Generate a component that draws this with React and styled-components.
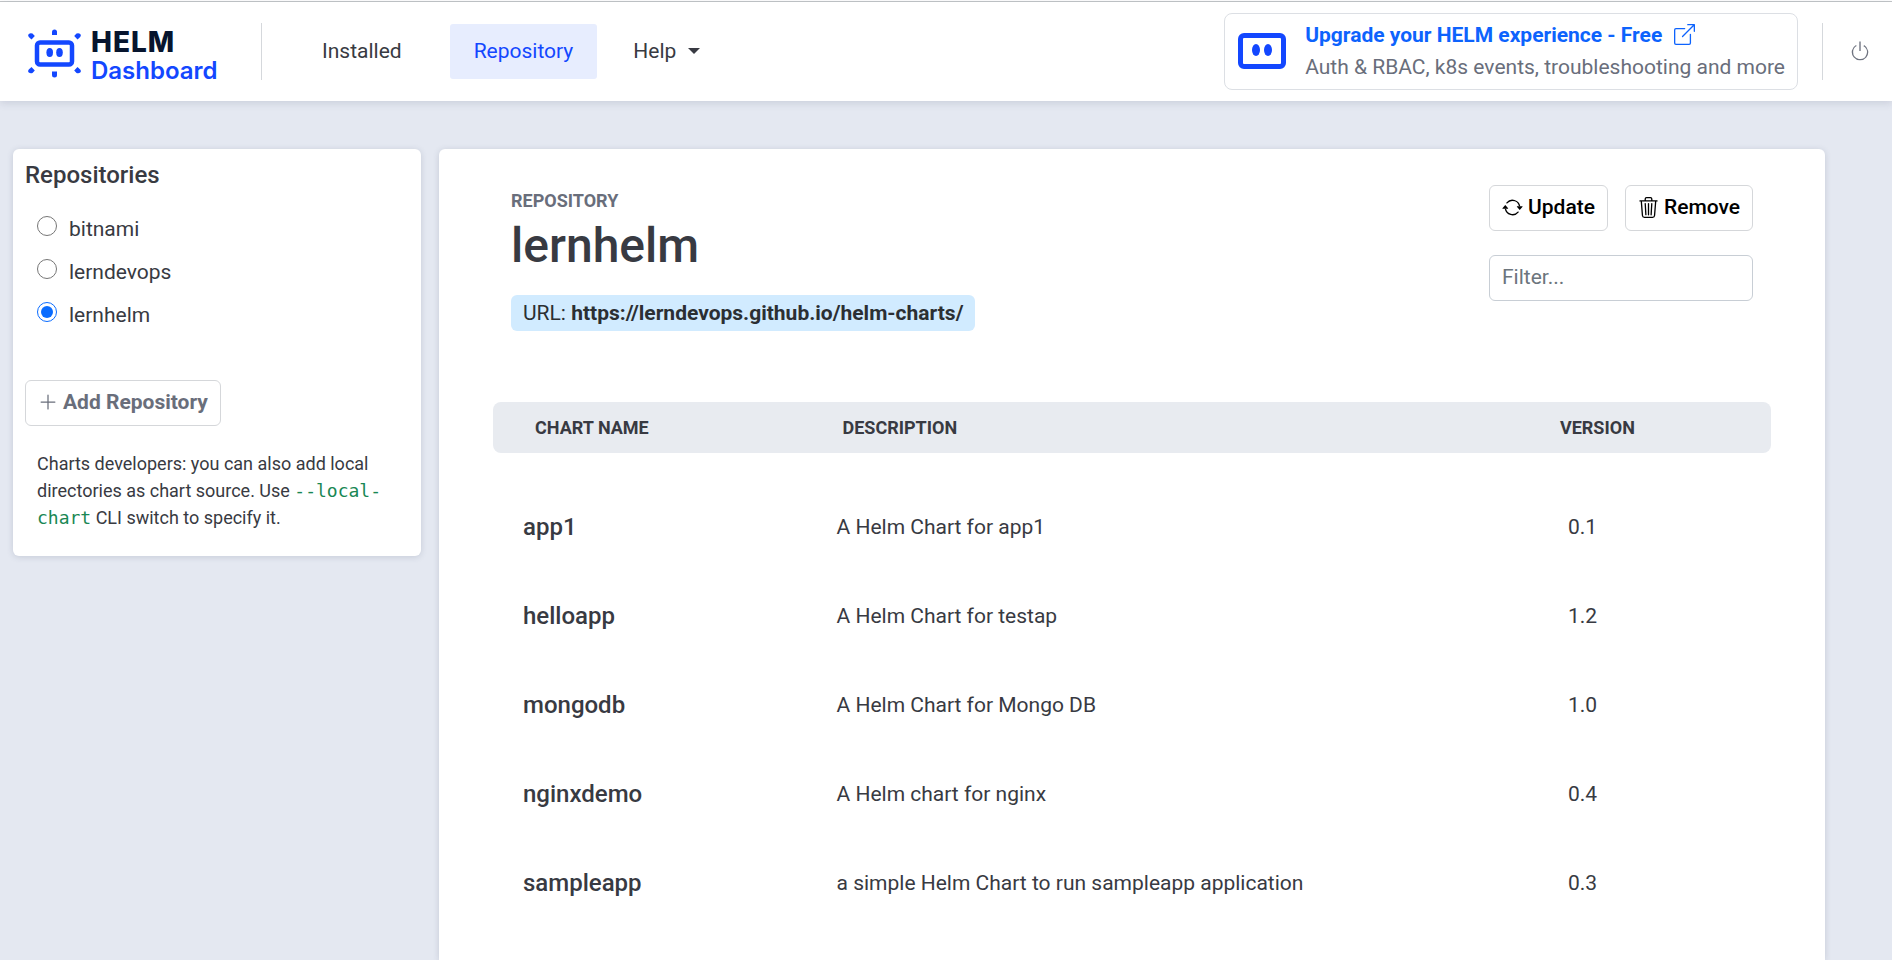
import React, { useState } from "react";
import styled, { createGlobalStyle, css } from "styled-components";
import {
  BsArrowRepeat,
  BsBoxArrowUpRight,
  BsPlusLg,
  BsPower,
  BsTrash3,
} from "react-icons/bs";

const GlobalStyle = createGlobalStyle`
  *, *::before, *::after { box-sizing: border-box; }
  body {
    margin: 0;
    background: #e4e8f1;
    color: #383a42;
    font-family: Roboto, "Liberation Sans", sans-serif;
    font-size: 21px;
    line-height: 32px;
  }
  button, input { font: inherit; }
`;

const Page = styled.div`
  display: flex;
  flex-direction: column;
  min-height: 100vh;
`;

const TopEdge = styled.div`
  height: 2px;
  background: #fff;
  border-bottom: 1px solid #c3c6c8;
`;

const Header = styled.header`
  display: flex;
  align-items: center;
  min-height: 99px;
  padding: 0 21px 0 28px;
  background: #fff;
  box-shadow: 0 2px 8px rgba(60, 70, 100, 0.16);
`;

const Brand = styled.a`
  display: flex;
  align-items: center;
  gap: 10px;
  height: 57px;
  padding: 4px 44px 0 0;
  border-right: 1px solid #d5d8dc;
  text-decoration: none;
`;

const BrandText = styled.span`
  display: flex;
  flex-direction: column;
  width: 126px;
  padding-top: 4px;
`;

const BrandName = styled.span`
  color: #07152e;
  font: 800 28px/30px Inter, sans-serif;
  letter-spacing: 1px;
`;

const BrandProduct = styled.span`
  color: #1347ff;
  font: 600 24px/28px Inter, sans-serif;
`;

const Nav = styled.nav`
  display: flex;
  align-items: center;
  gap: 24px;
  padding-left: 36px;
`;

const NavLink = styled.a`
  padding: 11px 24px 12px;
  border-radius: 3px;
  color: #383a42;
  text-decoration: none;
  ${(p) =>
    p.$active &&
    css`
      background: #e7edfe;
      color: #1347ff;
    `}
`;

const NavMenu = styled.button`
  display: flex;
  align-items: center;
  gap: 12px;
  padding: 0 12px 2px;
  border: 0;
  background: none;
  color: #383a42;
`;

const HeaderEnd = styled.div`
  display: flex;
  align-items: center;
  gap: 24px;
  margin-left: auto;
`;

const Promo = styled.a`
  display: flex;
  align-items: center;
  gap: 19px;
  min-height: 77px;
  padding: 0 12px 2px 13px;
  border: 1px solid #dcdfe4;
  border-radius: 8px;
  color: #696e7b;
  text-decoration: none;
`;

const PromoTitle = styled.span`
  display: flex;
  align-items: center;
  gap: 12px;
  color: #0d63fd;
  font-weight: 700;
`;

const PowerArea = styled.div`
  display: flex;
  align-items: center;
  height: 57px;
  padding: 0 0 2px 26px;
  border-left: 1px solid #d5d8dc;
`;

const PowerButton = styled.button`
  display: flex;
  padding: 0;
  border: 0;
  background: none;
  color: #6f7480;
`;

const Layout = styled.div`
  display: flex;
  align-items: flex-start;
  flex: 1;
  gap: 18px;
  padding: 48px 67px 0 13px;
`;

const Card = styled.section`
  background: #fff;
  border-radius: 6px;
  box-shadow: 0 1px 6px rgba(60, 70, 100, 0.18);
`;

const Sidebar = styled(Card).attrs({ as: "aside" })`
  flex: 0 0 408px;
  padding: 11px 12px 25px;
`;

const SidebarTitle = styled.h2`
  margin: 0 0 17px;
  font-size: 24px;
  line-height: 30px;
  font-weight: 500;
`;

const RepoList = styled.div`
  display: flex;
  flex-direction: column;
  padding-left: 12px;
`;

const RepoOption = styled.label`
  display: flex;
  align-items: center;
  gap: 12px;
  height: 43px;
`;

const Radio = styled.input`
  width: 20px;
  height: 20px;
  margin: 0 0 5px;
  accent-color: #0a6cff;
`;

const Button = styled.button`
  display: inline-flex;
  align-items: center;
  gap: 5px;
  height: 46px;
  padding: 0 12px 2px;
  border: 1px solid #d5d7da;
  border-radius: 6px;
  background: #fff;
  color: ${(p) => (p.$muted ? "#696e7b" : "#000")};
  font-weight: ${(p) => (p.$muted ? 700 : 500)};
`;

const AddRow = styled.div`
  display: flex;
  margin-top: 44px;
`;

const Hint = styled.p`
  margin: 24px 12px 0;
  font-size: 18px;
  line-height: 27px;
`;

const Code = styled.code`
  color: #198754;
  font-family: "DejaVu Sans Mono", monospace;
  font-size: 18px;
`;

const Main = styled(Card).attrs({ as: "main" })`
  flex: 1;
  align-self: stretch;
  min-width: 0;
  padding: 36px 54px 0;
  border-radius: 6px 6px 0 0;
`;

const Top = styled.div`
  display: flex;
  justify-content: space-between;
  padding: 0 18px;
`;

const Heading = styled.div`
  display: flex;
  flex-direction: column;
  align-items: flex-start;
`;

const Eyebrow = styled.span`
  margin-top: 4px;
  color: #696e7b;
  font-size: 18px;
  line-height: 24px;
  font-weight: 700;
`;

const RepoName = styled.h1`
  margin: 0 0 16px;
  font-size: 48px;
  line-height: 66px;
  font-weight: 500;
`;

const UrlBadge = styled.div`
  padding: 2px 12px;
  border-radius: 6px;
  background: #d1ebff;
  color: #2b2f33;
`;

const Tools = styled.div`
  display: flex;
  flex-direction: column;
  gap: 24px;
`;

const Actions = styled.div`
  display: flex;
  gap: 17px;
`;

const Filter = styled.input`
  width: 0;
  min-width: 100%;
  height: 46px;
  padding: 0 12px 2px;
  border: 1px solid #c8ced5;
  border-radius: 6px;
  background: #fff;
  color: inherit;
  &::placeholder {
    color: #6c757d;
    opacity: 1;
  }
`;

const ChartTable = styled.table`
  width: 100%;
  margin-top: 71px;
  border-collapse: separate;
  border-spacing: 0;
  table-layout: fixed;
  text-align: left;
`;

const Column = styled.col`
  width: ${(p) => p.$width};
`;

const HeadCell = styled.th`
  height: 51px;
  padding: 0 0 0 ${(p) => p.$inset};
  background: #e8ebf0;
  font-size: 18px;
  line-height: 24px;
  font-weight: 700;
  &:first-child { border-radius: 8px 0 0 8px; }
  &:last-child { border-radius: 0 8px 8px 0; }
`;

const Row = styled.tr`
  height: 89px;
`;

const Body = styled.tbody`
  &::before {
    content: "";
    display: table-row;
    height: 29px;
  }
`;

const Cell = styled.td`
  padding: 0 0 0 ${(p) => p.$inset};
`;

const NameCell = styled(Cell)`
  font-size: 24px;
  font-weight: 500;
`;

const HelmMark = () => (
  <svg width="53" height="49" viewBox="0 0 53 49" fill="none" aria-hidden="true">
    <rect x="9" y="13.5" width="35" height="22" rx="3" stroke="#1347ff" strokeWidth="4.5" />
    <ellipse cx="21.7" cy="23.5" rx="3.3" ry="4.5" fill="#1347ff" />
    <ellipse cx="31.5" cy="23.5" rx="3.3" ry="4.5" fill="#1347ff" />
    <g fill="#1347ff">
      <path d="M24 6V3q0-2.5 2.5-2.5T29 3v3z" />
      <path d="M24 42.5h5V46q0 2.5-2.5 2.5T24 46z" />
      <path d="M6.8 7 3.5 10.5.8 8q-1.3-1.8 0-3T4.500 4.500z" />
      <path d="M46.2 7l3.3 3.5L52.2 8q1.3-1.8 0-3t-3.7-.5z" />
      <path d="M6.8 41.5 3.5 38 .8 40.5q-1.3 1.8 0 3t3.7.5z" />
      <path d="M46.2 41.5l3.3-3.5 2.7 2.5q1.3 1.8 0 3t-3.7.5z" />
    </g>
  </svg>
);

const PromoMark = () => (
  <svg width="48" height="36" viewBox="0 0 48 36" fill="none" aria-hidden="true">
    <rect x="2.5" y="2.5" width="43" height="31" rx="3.5" stroke="#1347ff" strokeWidth="5" />
    <ellipse cx="18" cy="17" rx="4" ry="6" fill="#1347ff" />
    <ellipse cx="30" cy="17" rx="4" ry="6" fill="#1347ff" />
  </svg>
);

const Caret = () => (
  <svg width="12" height="6" viewBox="0 0 12 6" aria-hidden="true">
    <path d="M0 0h12L6 6z" fill="#383a42" />
  </svg>
);

const repositories = ["bitnami", "lerndevops", "lernhelm"];

const charts = [
  ["app1", "A Helm Chart for app1", "0.1"],
  ["helloapp", "A Helm Chart for testap", "1.2"],
  ["mongodb", "A Helm Chart for Mongo DB", "1.0"],
  ["nginxdemo", "A Helm chart for nginx", "0.4"],
  ["sampleapp", "a simple Helm Chart to run sampleapp application", "0.3"],
];

export default function App() {
  const [selected, setSelected] = useState("lernhelm");

  return (
    <Page>
      <GlobalStyle />
      <TopEdge />
      <Header>
        <Brand href="#">
          <HelmMark />
          <BrandText>
            <BrandName>HELM</BrandName>
            <BrandProduct>Dashboard</BrandProduct>
          </BrandText>
        </Brand>
        <Nav>
          <NavLink href="#installed">Installed</NavLink>
          <NavLink href="#repository" $active>Repository</NavLink>
          <NavMenu type="button">
            Help
            <Caret />
          </NavMenu>
        </Nav>
        <HeaderEnd>
          <Promo href="#upgrade">
            <PromoMark />
            <div>
              <PromoTitle>
                Upgrade your HELM experience - Free
                <BsBoxArrowUpRight size={21} />
              </PromoTitle>
              Auth &amp; RBAC, k8s events, troubleshooting and more
            </div>
          </Promo>
          <PowerArea>
            <PowerButton type="button" aria-label="Shut down">
              <BsPower size={22} />
            </PowerButton>
          </PowerArea>
        </HeaderEnd>
      </Header>

      <Layout>
        <Sidebar>
          <SidebarTitle>Repositories</SidebarTitle>
          <RepoList>
            {repositories.map((name) => (
              <RepoOption key={name}>
                <Radio
                  type="radio"
                  name="repository"
                  value={name}
                  checked={selected === name}
                  onChange={() => setSelected(name)}
                />
                {name}
              </RepoOption>
            ))}
          </RepoList>
          <AddRow>
            <Button type="button" $muted>
              <BsPlusLg size={20} />
              Add Repository
            </Button>
          </AddRow>
          <Hint>
            Charts developers: you can also add local directories as chart
            source. Use <Code>--local-chart</Code> CLI switch to specify it.
          </Hint>
        </Sidebar>

        <Main>
          <Top>
            <Heading>
              <Eyebrow>REPOSITORY</Eyebrow>
              <RepoName>lernhelm</RepoName>
              <UrlBadge>
                URL: <strong>https://lerndevops.github.io/helm-charts/</strong>
              </UrlBadge>
            </Heading>
            <Tools>
              <Actions>
                <Button type="button">
                  <BsArrowRepeat size={21} />
                  Update
                </Button>
                <Button type="button">
                  <BsTrash3 size={21} />
                  Remove
                </Button>
              </Actions>
              <Filter type="text" placeholder="Filter..." aria-label="Filter charts" />
            </Tools>
          </Top>
          <ChartTable>
            <colgroup>
              <Column $width="25%" />
              <Column $width="57%" />
              <Column $width="18%" />
            </colgroup>
            <thead>
              <tr>
                <HeadCell scope="col" $inset="42px">CHART NAME</HeadCell>
                <HeadCell scope="col" $inset="30px">DESCRIPTION</HeadCell>
                <HeadCell scope="col" $inset="19px">VERSION</HeadCell>
              </tr>
            </thead>
            <Body>
              {charts.map(([name, description, version]) => (
                <Row key={name}>
                  <NameCell $inset="30px">{name}</NameCell>
                  <Cell $inset="24px">{description}</Cell>
                  <Cell $inset="27px">{version}</Cell>
                </Row>
              ))}
            </Body>
          </ChartTable>
        </Main>
      </Layout>
    </Page>
  );
}
